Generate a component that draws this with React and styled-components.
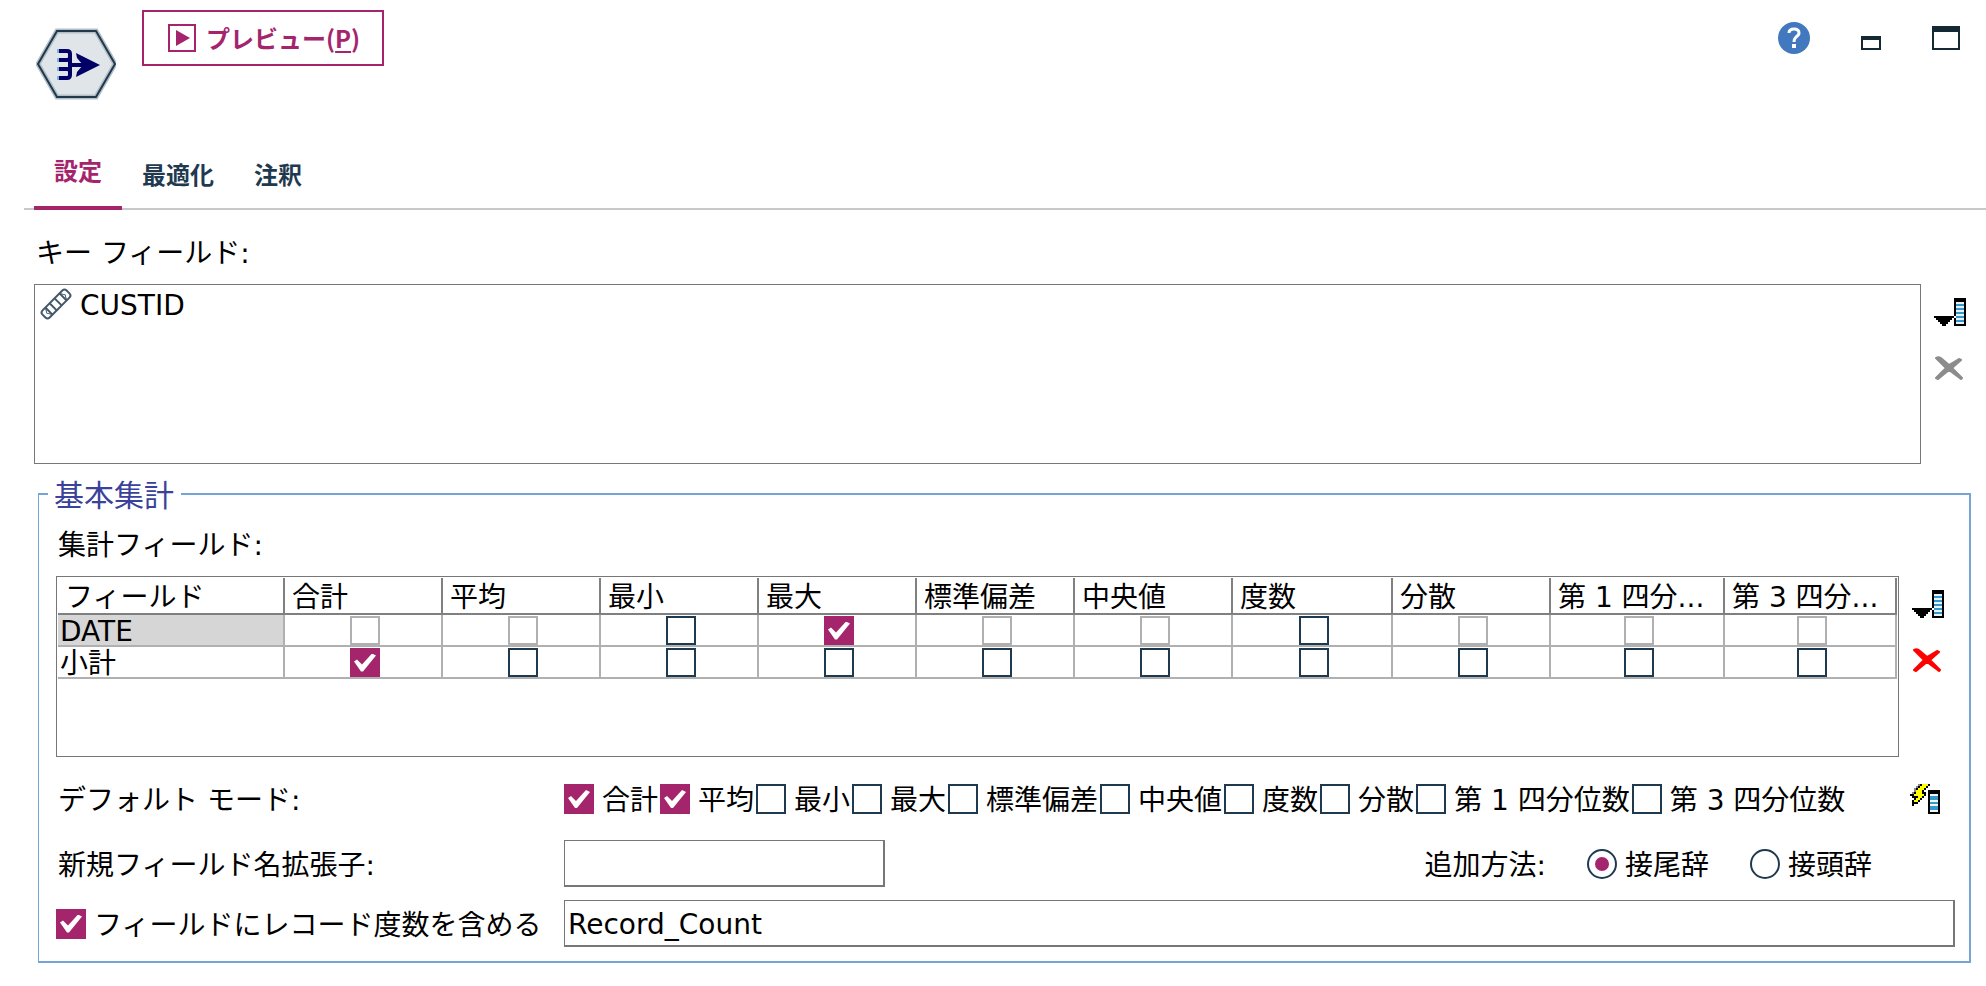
import React from "react";
import styled, { createGlobalStyle, css } from "styled-components";

const columns = [
  { label: "フィールド", width: 227 },
  { label: "合計", width: 158 },
  { label: "平均", width: 158 },
  { label: "最小", width: 158 },
  { label: "最大", width: 158 },
  { label: "標準偏差", width: 158 },
  { label: "中央値", width: 158 },
  { label: "度数", width: 160 },
  { label: "分散", width: 158 },
  { label: "第 1 四分...", width: 174 },
  { label: "第 3 四分...", width: 172 },
];

// "x" = disabled, "1" = checked, "0" = unchecked
const rows = [
  { name: "DATE", selected: true, cells: "xx01xx0xxx" },
  { name: "小計", selected: false, cells: "1000000000" },
];

const defaultModes = [
  { label: "合計", checked: true },
  { label: "平均", checked: true },
  { label: "最小" },
  { label: "最大" },
  { label: "標準偏差" },
  { label: "中央値" },
  { label: "度数" },
  { label: "分散" },
  { label: "第 1 四分位数" },
  { label: "第 3 四分位数" },
];

const NodeIcon = () => (
  <svg width="80" height="72" viewBox="0 0 80 72" aria-hidden="true">
    <path
      d="M2 36 L21 3 H60 L79 36 L60 69 H21 Z"
      fill="#e0e5e9"
      stroke="#b4bec6"
      strokeWidth="5"
    />
    <path
      d="M2 36 L21 3 H60 L79 36 L60 69 H21 Z"
      fill="none"
      stroke="#1f3a4f"
      strokeWidth="2"
    />
    <g fill="none" stroke="#000066" strokeWidth="4">
      <path d="M22 23 H31 Q34 23 34 26 V29 Q34 32 31 32 H22" />
      <path d="M22 41 H31 Q34 41 34 44 V47 Q34 50 31 50 H22" />
      <path d="M34 27 V46" />
      <path d="M34 37 H56" />
    </g>
    <path
      d="M40 25 L64 37 L40 49 L41 44 L47 37 L41 30 Z"
      fill="#000066"
    />
    <path d="M22 21 V25 M22 30 V34 M22 39 V43 M22 48 V52" stroke="#7fb2d6" strokeWidth="2" />
  </svg>
);

const PreviewIcon = () => (
  <svg width="28" height="28" viewBox="0 0 28 28" aria-hidden="true">
    <rect x="1" y="1" width="26" height="26" fill="#fff" stroke="#a5256d" strokeWidth="2" />
    <path d="M8 6 L22 14 L8 22 Z" fill="#a5256d" />
  </svg>
);

const HelpIcon = () => (
  <svg width="32" height="32" viewBox="0 0 32 32" aria-hidden="true">
    <circle cx="16" cy="16" r="16" fill="#4178be" />
    <path
      d="M11 11 Q11 7 16 7 Q21 7 21 11 Q21 13 18 15 Q16 17 16 20"
      fill="none"
      stroke="#fff"
      strokeWidth="3"
    />
    <rect x="14" y="22" width="4" height="4" fill="#fff" />
  </svg>
);

const MinimizeIcon = () => (
  <svg width="20" height="32" viewBox="0 0 20 32" aria-hidden="true">
    <rect x="0" y="14" width="20" height="14" fill="#152935" />
    <rect x="2" y="18" width="16" height="8" fill="#fff" />
  </svg>
);

const MaximizeIcon = () => (
  <svg width="28" height="32" viewBox="0 0 28 32" aria-hidden="true">
    <rect x="0" y="4" width="28" height="24" fill="#152935" />
    <rect x="2" y="10" width="24" height="16" fill="#fff" />
  </svg>
);

const RulerIcon = () => (
  <svg width="32" height="32" viewBox="0 0 32 32" aria-hidden="true">
    <g transform="rotate(-45 16 16)" fill="none" stroke="#44586a" strokeWidth="2">
      <rect x="-1" y="11" width="34" height="10" rx="3" fill="#fff" />
      <path d="M6 11 V21 M12 11 V21 M19 11 V21 M26 11 V21" />
      <path d="M6 11 L3 16 L6 21 M26 11 L29 16 L26 21" strokeWidth="1" />
    </g>
  </svg>
);

const PickerIcon = () => (
  <svg width="32" height="28" viewBox="0 0 32 28" shapeRendering="crispEdges" aria-hidden="true">
    <path d="M0 18 H20 V20 H18 V22 H16 V24 H14 V26 H12 V28 H8 V26 H6 V24 H4 V22 H2 V20 H0 Z" />
    <rect x="20" y="0" width="12" height="28" />
    <rect x="22" y="4" width="8" height="22" fill="#e8f2f8" />
    <path d="M22 7 H30 M22 11 H30 M22 15 H30 M22 19 H30 M22 23 H30" stroke="#3399cc" strokeWidth="2" />
    <rect x="20" y="18" width="2" height="2" fill="#fff" />
  </svg>
);

const DeleteIcon = ({ color }) => (
  <svg width="30" height="24" viewBox="0 0 30 24" aria-hidden="true">
    <path
      d="M2 2 Q5 0 8 3 L15 9 L25 3 L27 4 L18 12 L28 22 L27 23 L15 14 L4 23 L2 22 L12 12 L5 5 Z"
      fill={color}
      stroke={color}
      strokeWidth="2"
      strokeLinejoin="round"
    />
  </svg>
);

const ApplyIcon = () => (
  <svg width="30" height="30" viewBox="0 0 30 30" shapeRendering="crispEdges" aria-hidden="true">
    <path d="M8 0 H20 V2 H18 V4 H16 V6 H14 V8 H16 V12 H14 V14 H12 V16 H10 V18 H8 V20 H4 V22 H2 V16 H4 V14 H2 V12 H0 V10 H2 V8 H4 V4 H6 V2 H8 Z" fill="#000" />
    <path d="M8 0 H10 V2 H8 V4 H6 V8 H4 V10 H2 V8 H4 V4 H6 V2 H8 Z" fill="#888" />
    <path d="M12 0 H18 V2 H16 V4 H14 V6 H12 V10 H14 V12 H12 V14 H10 V16 H8 V18 H4 V16 H6 V14 H8 V12 H4 V10 H6 V6 H8 V4 H10 V2 H12 Z" fill="#ffff00" />
    <rect x="18" y="6" width="12" height="24" />
    <rect x="20" y="10" width="8" height="18" fill="#3399cc" />
    <path d="M20 11 H28 M20 17 H28 M20 21 H28 M20 27 H28" stroke="#f2f6f8" strokeWidth="2" />
  </svg>
);

const App = () => {
  return (
    <>
      <GlobalStyle />
      <Page>
        <Header>
          <NodeBadge>
            <NodeIcon />
          </NodeBadge>
          <PreviewButton type="button">
            <PreviewIcon />
            <span>
              プレビュー(<u>P</u>)
            </span>
          </PreviewButton>
          <WindowControls>
            <IconButton type="button" aria-label="ヘルプ">
              <HelpIcon />
            </IconButton>
            <IconButton type="button" aria-label="最小化">
              <MinimizeIcon />
            </IconButton>
            <IconButton type="button" aria-label="最大化">
              <MaximizeIcon />
            </IconButton>
          </WindowControls>
        </Header>

        <TabList role="tablist">
          <Tab type="button" role="tab" aria-selected="true" $active>
            設定
          </Tab>
          <Tab type="button" role="tab" aria-selected="false">
            最適化
          </Tab>
          <Tab type="button" role="tab" aria-selected="false">
            注釈
          </Tab>
        </TabList>

        <KeySection>
          <SectionLabel id="key-label">キー フィールド:</SectionLabel>
          <PanelRow>
            <KeyList aria-labelledby="key-label">
              <KeyItem>
                <RulerIcon />
                <Text>CUSTID</Text>
              </KeyItem>
            </KeyList>
            <SideButtons>
              <IconButton type="button" aria-label="フィールドを選択">
                <PickerIcon />
              </IconButton>
              <IconButton type="button" aria-label="削除" disabled>
                <DeleteIcon color="#8c8c8c" />
              </IconButton>
            </SideButtons>
          </PanelRow>
        </KeySection>

        <Group>
          <Legend>基本集計</Legend>
          <GroupLabel id="aggregate-label">集計フィールド:</GroupLabel>
          <PanelRow>
            <TableFrame>
              <Table aria-labelledby="aggregate-label">
                <colgroup>
                  {columns.map((column) => (
                    <Column key={column.label} $width={column.width} />
                  ))}
                </colgroup>
                <thead>
                  <tr>
                    {columns.map((column) => (
                      <HeadCell key={column.label}>{column.label}</HeadCell>
                    ))}
                  </tr>
                </thead>
                <tbody>
                  {rows.map((row) => (
                    <tr key={row.name}>
                      <NameCell $selected={row.selected}>{row.name}</NameCell>
                      {row.cells.split("").map((cell, i) => (
                        <CheckCell key={columns[i + 1].label}>
                          <Checkbox
                            type="checkbox"
                            aria-label={`${row.name} ${columns[i + 1].label}`}
                            defaultChecked={cell === "1"}
                            disabled={cell === "x"}
                            $inCell
                          />
                        </CheckCell>
                      ))}
                    </tr>
                  ))}
                </tbody>
              </Table>
            </TableFrame>
            <SideButtons>
              <IconButton type="button" aria-label="集計フィールドを選択">
                <PickerIcon />
              </IconButton>
              <IconButton type="button" aria-label="集計フィールドを削除">
                <DeleteIcon color="#ff0000" />
              </IconButton>
            </SideButtons>
          </PanelRow>

          <ModeRow>
            <RowTitle>デフォルト モード:</RowTitle>
            <ModeList>
              {defaultModes.map((mode) => (
                <CheckLabel key={mode.label}>
                  <Checkbox type="checkbox" defaultChecked={mode.checked} />
                  <Text>{mode.label}</Text>
                </CheckLabel>
              ))}
            </ModeList>
            <IconButton type="button" aria-label="デフォルトを適用">
              <ApplyIcon />
            </IconButton>
          </ModeRow>

          <FormRow $top={26}>
            <RowTitle as="label" htmlFor="extension">
              新規フィールド名拡張子:
            </RowTitle>
            <ExtensionArea>
              <ExtensionInput id="extension" type="text" />
              <RadioGroup role="radiogroup" aria-labelledby="add-label">
                <Text id="add-label">追加方法:</Text>
                <CheckLabel>
                  <Radio type="radio" name="affix" defaultChecked />
                  <Text>接尾辞</Text>
                </CheckLabel>
                <CheckLabel>
                  <Radio type="radio" name="affix" />
                  <Text>接頭辞</Text>
                </CheckLabel>
              </RadioGroup>
            </ExtensionArea>
          </FormRow>

          <FormRow $top={13}>
            <CheckLabel>
              <Checkbox type="checkbox" defaultChecked />
              <Text>フィールドにレコード度数を含める</Text>
            </CheckLabel>
            <TextInput
              type="text"
              aria-label="レコード度数フィールド"
              defaultValue="Record_Count"
            />
          </FormRow>
        </Group>
      </Page>
    </>
  );
};

// Styled Components

const GlobalStyle = createGlobalStyle`
  * {
    box-sizing: border-box;
  }

  body {
    margin: 0;
    background-color: #fff;
    color: #000;
    font-family: "DejaVu Sans", "Noto Sans CJK JP", sans-serif;
    font-size: 28px;
    line-height: 30px;
  }

  button,
  input {
    margin: 0;
    font: inherit;
    color: inherit;
  }
`;

const Page = styled.div`
  padding-top: 10px;
  white-space: nowrap;
`;

const Header = styled.header`
  display: flex;
  align-items: flex-start;
  height: 140px;
  padding: 0 26px 0 36px;
`;

const NodeBadge = styled.div`
  display: flex;
  margin: 18px 26px 0 0;
`;

const PreviewButton = styled.button`
  display: flex;
  align-items: center;
  gap: 10px;
  height: 56px;
  padding: 0 22px 0 24px;
  background-color: #fff;
  border: 2px solid #a5256d;
  color: #a5256d;
  font-family: "Noto Sans CJK JP", sans-serif;
  font-size: 24px;
  font-weight: 700;
  cursor: pointer;

  u {
    text-underline-offset: 3px;
  }
`;

const WindowControls = styled.div`
  display: flex;
  gap: 51px;
  margin: 12px 0 0 auto;
`;

const IconButton = styled.button`
  display: flex;
  padding: 0;
  background: none;
  border: none;
  cursor: pointer;
`;

const TabList = styled.div`
  display: flex;
  height: 60px;
  margin-left: 24px;
  padding-left: 10px;
  box-shadow: inset 0 -2px #c8c8c8;
`;

const Tab = styled.button`
  padding: 0 20px 12px;
  background: none;
  border: none;
  color: #1f3a4f;
  font-family: "Noto Sans CJK JP", sans-serif;
  font-size: 24px;
  font-weight: 700;
  cursor: pointer;

  ${({ $active }) =>
    $active &&
    css`
      padding-bottom: 16px;
      border-bottom: 4px solid #a5256d;
      color: #a5256d;
    `}
`;

const KeySection = styled.section`
  padding: 24px 7px 0 34px;
`;

const SectionLabel = styled.div`
  padding: 0 2px;
  margin-bottom: 10px;
  line-height: 40px;
`;

const PanelRow = styled.div`
  display: flex;
`;

const KeyList = styled.ul`
  flex: 1;
  height: 180px;
  margin: 0;
  padding: 3px 5px;
  border: 1px solid #777;
  list-style: none;
`;

const KeyItem = styled.li`
  display: flex;
  align-items: center;
  gap: 8px;
`;

// Sits a little low in its line, like the text of the other controls
const Text = styled.span`
  padding-top: 4px;
  line-height: 26px;
`;

const RowTitle = styled(Text)`
  padding-left: 2px;
`;

const SideButtons = styled.div`
  display: flex;
  flex-direction: column;
  align-items: flex-start;
  gap: 30px;
  width: 58px;
  padding: 14px 0 0 13px;
`;

const Group = styled.fieldset`
  min-width: 0;
  margin: 10px 15px 0 38px;
  padding: 0 12px 14px 17px;
  border: 2px solid #75a5d6;
  border-left-width: 1px;
`;

const Legend = styled.legend`
  margin-left: -8px;
  padding: 4px 7px 0 6px;
  color: #3a429b;
  font-size: 30px;
  line-height: 36px;
`;

const GroupLabel = styled.div`
  padding: 12px 2px 10px;
  line-height: 40px;
`;

const TableFrame = styled.div`
  flex: 1;
  height: 181px;
  padding: 1px;
  border: 1px solid #777;
`;

const Table = styled.table`
  width: 100%;
  table-layout: fixed;
  border-collapse: separate;
  border-spacing: 0;
`;

const Column = styled.col`
  width: ${({ $width }) => $width}px;
`;

const HeadCell = styled.th`
  height: 37px;
  padding: 4px 0 0 7px;
  border-right: 2px solid #808080;
  border-bottom: 2px solid #808080;
  font-weight: 400;
  text-align: left;
  overflow: hidden;
`;

const NameCell = styled.td`
  height: 32px;
  padding: 4px 0 0 2px;
  background-color: ${({ $selected }) => ($selected ? "#d6d6d6" : "#fff")};
  border-right: 2px solid #b0b0b0;
  border-bottom: 2px solid #b0b0b0;
  line-height: 26px;
`;

const CheckCell = styled.td`
  height: 32px;
  padding: 1px 0 0 4px;
  border-right: 2px solid #b0b0b0;
  border-bottom: 2px solid #b0b0b0;
`;

const Checkbox = styled.input`
  appearance: none;
  display: grid;
  place-content: center;
  flex: none;
  width: 30px;
  height: ${({ $inCell }) => ($inCell ? 29 : 30)}px;
  margin: ${({ $inCell }) => ($inCell ? "0 auto" : "0")};
  border: 2px solid #1f3a4f;
  background-color: #fff;

  &:disabled {
    border-color: #b0b0b0;
  }

  &:checked {
    border-color: #a5256d;
    background-color: #a5256d;
  }

  &:checked::before {
    content: "";
    width: 22px;
    height: 18px;
    background-color: #fff;
    clip-path: polygon(0 8px, 3px 6px, 8px 11px, 18px 0, 22px 2px, 9px 18px, 7px 18px);
  }
`;

const CheckLabel = styled.label`
  display: flex;
  align-items: center;
  gap: 8px;
`;

const ModeRow = styled.div`
  display: grid;
  grid-template-columns: 508px 1fr auto;
  align-items: center;
  margin-top: 27px;
  padding-right: 17px;
`;

const ModeList = styled.div`
  display: flex;
  gap: 2px;
`;

const FormRow = styled.div`
  display: grid;
  grid-template-columns: 508px 1fr;
  align-items: center;
  margin-top: ${({ $top }) => $top}px;
  padding-right: 2px;
`;

const ExtensionArea = styled.div`
  display: flex;
  align-items: center;
  justify-content: space-between;
  padding-right: 83px;
`;

const TextInput = styled.input`
  width: 100%;
  height: 47px;
  padding: 3px 3px 0;
  background-color: #fff;
  border: 1px solid #777;
  border-right-width: 2px;
  border-bottom-width: 2px;
  border-radius: 0;
`;

const ExtensionInput = styled(TextInput)`
  width: 321px;
`;

const RadioGroup = styled.div`
  display: flex;
  align-items: center;
  gap: 41px;
`;

const Radio = styled.input`
  appearance: none;
  display: grid;
  place-content: center;
  width: 30px;
  height: 30px;
  border: 2px solid #1f3a4f;
  border-radius: 50%;

  &:checked::before {
    content: "";
    width: 14px;
    height: 14px;
    background-color: #a5256d;
    border-radius: 50%;
  }
`;

export default App;
